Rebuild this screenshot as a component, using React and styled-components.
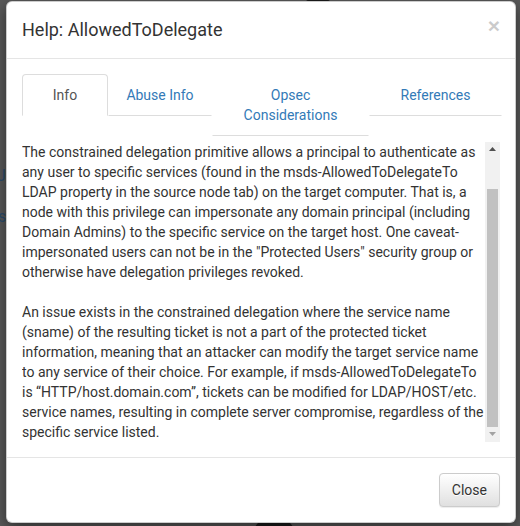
import React, { useLayoutEffect, useRef, useState } from "react";
import styled, { createGlobalStyle } from "styled-components";

const Global = createGlobalStyle`
  html, body { margin: 0; padding: 0; }
  body {
    background: #5a5a5a;
    font-family: Roboto, "Liberation Sans", Arial, sans-serif;
    font-size: 14px;
    line-height: 20px;
    color: #333;
    width: 520px;
    height: 526px;
    overflow: hidden;
  }
  * { box-sizing: border-box; }
`;

const Canvas = styled.div`
  position: relative;
  width: 520px;
  height: 526px;
  overflow: hidden;
  padding: 1px 0 0 6px;
`;

const GraphNode = styled.div`
  position: absolute;
  width: ${(p) => p.size}px;
  height: ${(p) => p.size}px;
  border-radius: 50%;
  background: #1c1c1c;
`;

const GraphLabel = styled.div`
  position: absolute;
  color: #2c4d6e;
  font-size: 16px;
  line-height: 20px;
`;

const Modal = styled.div`
  position: relative;
  width: 510px;
  background: #fff;
  border: 1px solid rgba(0, 0, 0, 0.2);
  border-radius: 6px;
  box-shadow: 0 5px 15px rgba(0, 0, 0, 0.5);
  display: flex;
  flex-direction: column;
`;

const Header = styled.div`
  padding: 15px;
  border-bottom: 1px solid #e5e5e5;
  display: flex;
  align-items: flex-start;
  justify-content: space-between;
`;

const Title = styled.h4`
  margin: 0;
  font-size: 18px;
  font-weight: 400;
  line-height: 1.42857;
  color: #333;
`;

const CloseX = styled.button`
  margin: -2px 0 0;
  padding: 0;
  border: 0;
  background: transparent;
  font-family: "Liberation Sans", Arial, sans-serif;
  font-size: 21px;
  font-weight: 700;
  line-height: 1;
  color: #000;
  opacity: 0.2;
  text-shadow: 0 1px 0 #fff;
  cursor: pointer;
`;

const Body = styled.div`
  padding: 15px;
`;

const Tabs = styled.ul`
  list-style: none;
  margin: 0;
  padding: 0;
  display: flex;
  align-items: flex-start;
`;

const TabItem = styled.li`
  width: ${(p) => p.w}px;
  flex: none;
`;

const TabLink = styled.a`
  display: block;
  padding: 10px 15px;
  text-align: center;
  line-height: 20px;
  text-decoration: none;
  border: 1px solid transparent;
  border-radius: 4px 4px 0 0;
  color: ${(p) => (p.active ? "#555" : "#337ab7")};
  border-color: ${(p) => (p.active ? "#ddd #ddd transparent #ddd" : "transparent transparent #ddd transparent")};
  background: #fff;
  cursor: pointer;
`;

const ScrollArea = styled.div`
  margin-top: 6px;
  height: 300px;
  display: flex;
`;

const Viewport = styled.div`
  flex: 1;
  min-width: 0;
  height: 100%;
  overflow-y: auto;
  scrollbar-width: none;
  &::-webkit-scrollbar { display: none; }
`;

const Rail = styled.div`
  width: 15px;
  flex: none;
  height: 100%;
  background: #f1f1f1;
  display: flex;
  flex-direction: column;
`;

const Arrow = styled.div`
  height: 15px;
  flex: none;
  display: flex;
  align-items: center;
  justify-content: center;
`;

const Track = styled.div`
  flex: 1;
  display: flex;
  flex-direction: column;
`;

const Thumb = styled.div`
  flex: none;
  margin: 0 2px;
  background: #c1c1c1;
`;

const Para = styled.p`
  margin: 0 0 20px;
  &:last-child { margin-bottom: 0; }
`;

const Footer = styled.div`
  padding: 15px;
  border-top: 1px solid #e5e5e5;
  display: flex;
  justify-content: flex-end;
`;

const Button = styled.button`
  font-family: Roboto, "Liberation Sans", Arial, sans-serif;
  font-size: 14px;
  line-height: 20px;
  padding: 6px 12px;
  color: #333;
  border: 1px solid #ccc;
  border-radius: 4px;
  background-image: linear-gradient(to bottom, #fff 0%, #e0e0e0 100%);
  text-shadow: 0 1px 0 #fff;
  box-shadow: inset 0 1px 0 rgba(255, 255, 255, 0.15), 0 1px 1px rgba(0, 0, 0, 0.075);
  cursor: pointer;
`;

const tabs = [
  { label: "Info", w: 86, active: true },
  { label: "Abuse Info", w: 104 },
  { label: "Opsec Considerations", w: 157 },
  { label: "References", w: 133 },
];

const TRACK = 270;

function Scrollbox({ children }) {
  const ref = useRef(null);
  const [m, setM] = useState({ top: 0, size: TRACK, atTop: true, atEnd: true });

  const measure = () => {
    const el = ref.current;
    if (!el) return;
    const max = el.scrollHeight - el.clientHeight;
    const size = Math.max(20, Math.round((TRACK * el.clientHeight) / el.scrollHeight));
    const top = max > 0 ? Math.round(((TRACK - size) * el.scrollTop) / max) : 0;
    setM({ top, size, atTop: el.scrollTop <= 0, atEnd: el.scrollTop >= max - 1 });
  };

  useLayoutEffect(() => {
    if (ref.current) ref.current.scrollTop = ref.current.scrollHeight;
    measure();
  }, []);

  return (
    <ScrollArea>
      <Viewport ref={ref} onScroll={measure}>
        {children}
      </Viewport>
      <Rail>
        <Arrow>
          <svg width="7" height="4" viewBox="0 0 7 4">
            <polygon points="0,4 3.5,0 7,4" fill={m.atTop ? "#a3a3a3" : "#505050"} />
          </svg>
        </Arrow>
        <Track>
          <div style={{ height: m.top, flex: "none" }} />
          <Thumb style={{ height: m.size }} />
        </Track>
        <Arrow>
          <svg width="7" height="4" viewBox="0 0 7 4">
            <polygon points="0,0 3.5,4 7,0" fill={m.atEnd ? "#a3a3a3" : "#505050"} />
          </svg>
        </Arrow>
      </Rail>
    </ScrollArea>
  );
}

export default function App() {
  return (
    <>
      <Global />
      <Canvas>
        <GraphNode size={40} style={{ left: 298, top: -36 }} />
        <GraphNode size={44} style={{ left: 252, top: 516 }} />
        <GraphLabel style={{ left: -3, top: 166 }}>J</GraphLabel>
        <GraphLabel style={{ left: -2, top: 207 }}>s</GraphLabel>
        <Modal>
          <Header>
            <Title>Help: AllowedToDelegate</Title>
            <CloseX aria-label="Close">×</CloseX>
          </Header>
          <Body>
            <Tabs>
              {tabs.map((t) => (
                <TabItem key={t.label} w={t.w}>
                  <TabLink active={t.active}>{t.label}</TabLink>
                </TabItem>
              ))}
            </Tabs>
            <Scrollbox>
              <Para>The user has the constrained delegation privilege to the computer.</Para>
              <Para>
                The constrained delegation primitive allows a principal to authenticate as
                any user to specific services (found in the msds-AllowedToDelegateTo LDAP
                property in the source node tab) on the target computer. That is, a node
                with this privilege can impersonate any domain principal (including Domain
                Admins) to the specific service on the target host. One caveat- impersonated
                users can not be in the "Protected Users" security group or otherwise have
                delegation privileges revoked.
              </Para>
              <Para>
                An issue exists in the constrained delegation where the service name (sname)
                of the resulting ticket is not a part of the protected ticket information,
                meaning that an attacker can modify the target service name to any service of
                their choice. For example, if msds-AllowedToDelegateTo is
                “HTTP/host.domain.com”, tickets can be modified for LDAP/HOST/etc. service
                names, resulting in complete server compromise, regardless of the specific
                service listed.
              </Para>
            </Scrollbox>
          </Body>
          <Footer>
            <Button>Close</Button>
          </Footer>
        </Modal>
      </Canvas>
    </>
  );
}
